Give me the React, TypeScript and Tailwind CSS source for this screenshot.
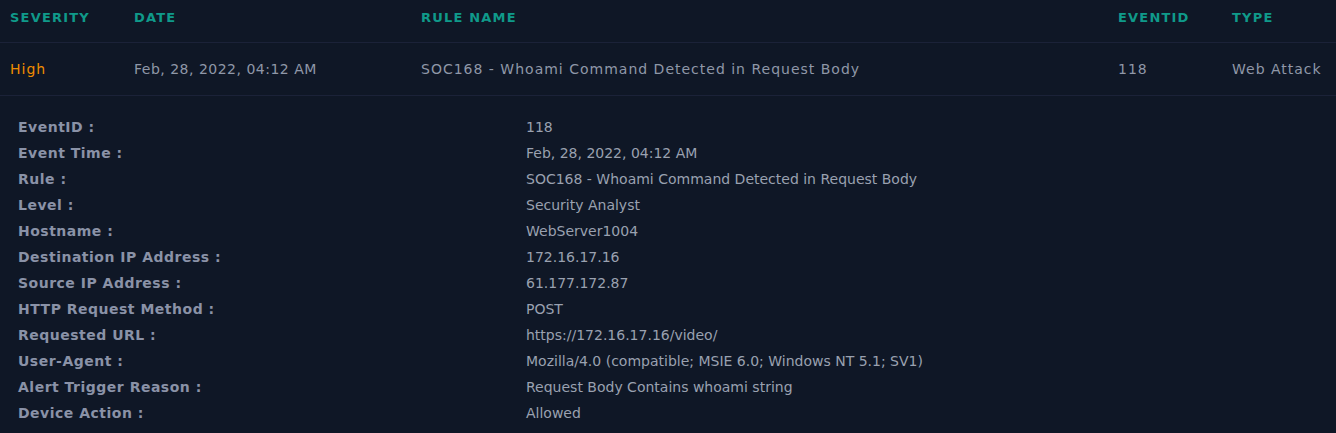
import React from "react";

const details: [string, string][] = [
  ["EventID :", "118"],
  ["Event Time :", "Feb, 28, 2022, 04:12 AM"],
  ["Rule :", "SOC168 - Whoami Command Detected in Request Body"],
  ["Level :", "Security Analyst"],
  ["Hostname :", "WebServer1004"],
  ["Destination IP Address :", "172.16.17.16"],
  ["Source IP Address :", "61.177.172.87"],
  ["HTTP Request Method :", "POST"],
  ["Requested URL :", "https://172.16.17.16/video/"],
  ["User-Agent :", "Mozilla/4.0 (compatible; MSIE 6.0; Windows NT 5.1; SV1)"],
  ["Alert Trigger Reason :", "Request Body Contains whoami string"],
  ["Device Action :", "Allowed"],
];

export default function App() {
  return (
    <div
      className="w-[1336px] h-[433px] overflow-hidden bg-[#0f1726]"
      style={{ fontFamily: '"DejaVu Sans", sans-serif' }}
    >
      <div className="grid grid-cols-[124px_287px_697px_114px_1fr] pl-[10px] h-[43px] pt-[8px] border-b border-[#1b2238] text-[13px] font-bold tracking-[1.2px] text-[#0f9a8a] leading-[20px]">
        <div>SEVERITY</div>
        <div>DATE</div>
        <div>RULE NAME</div>
        <div>EVENTID</div>
        <div>TYPE</div>
      </div>
      <div className="grid grid-cols-[124px_287px_697px_114px_1fr] items-center pl-[10px] h-[53px] border-b border-[#1b2238] text-[14px] tracking-[1px] text-[#8f97a8]">
        <div className="text-[#f08c00]">High</div>
        <div className="tracking-[0.5px]">Feb, 28, 2022, 04:12 AM</div>
        <div>SOC168 - Whoami Command Detected in Request Body</div>
        <div>118</div>
        <div>Web Attack</div>
      </div>
      <div className="pt-[18px] pl-[18px]">
        {details.map(([k, v]) => (
          <div key={k} className="grid grid-cols-[508px_1fr] h-[26px] items-center text-[14px] leading-[20px]">
            <div className="font-bold tracking-[0.5px] text-[#8a92a7]">{k}</div>
            <div className="text-[#9aa1b0]">{v}</div>
          </div>
        ))}
      </div>
    </div>
  );
}
